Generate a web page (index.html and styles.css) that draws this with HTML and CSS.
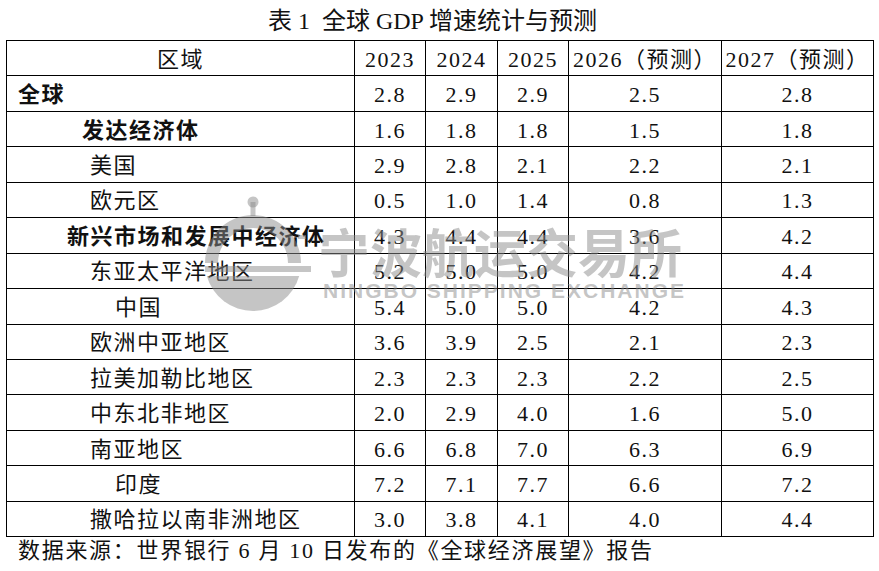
FILE: index.html
```html
<!DOCTYPE html>
<html lang="zh-CN">
<head>
<meta charset="utf-8">
<title>表 1 全球 GDP 增速统计与预测</title>
<link rel="stylesheet" href="styles.css">
</head>
<body>
<div class="page">
  <h1 class="title">表 1&nbsp; 全球 GDP 增速统计与预测</h1>
  <div class="table-wrap">
    <table class="data">
      <colgroup>
        <col class="c-region"><col class="c-yr"><col class="c-yr2"><col class="c-yr"><col class="c-fc"><col class="c-fc2">
      </colgroup>
      <thead>
        <tr><th>区域</th><th>2023</th><th>2024</th><th>2025</th><th>2026（预测）</th><th>2027（预测）</th></tr>
      </thead>
      <tbody>
        <tr class="bold"><td class="reg l0">全球</td><td>2.8</td><td>2.9</td><td>2.9</td><td>2.5</td><td>2.8</td></tr>
        <tr class="bold"><td class="reg l1">发达经济体</td><td>1.6</td><td>1.8</td><td>1.8</td><td>1.5</td><td>1.8</td></tr>
        <tr><td class="reg l2">美国</td><td>2.9</td><td>2.8</td><td>2.1</td><td>2.2</td><td>2.1</td></tr>
        <tr><td class="reg l2">欧元区</td><td>0.5</td><td>1.0</td><td>1.4</td><td>0.8</td><td>1.3</td></tr>
        <tr class="bold"><td class="reg l1b">新兴市场和发展中经济体</td><td>4.3</td><td>4.4</td><td>4.4</td><td>3.6</td><td>4.2</td></tr>
        <tr><td class="reg l2">东亚太平洋地区</td><td>5.2</td><td>5.0</td><td>5.0</td><td>4.2</td><td>4.4</td></tr>
        <tr><td class="reg l3">中国</td><td>5.4</td><td>5.0</td><td>5.0</td><td>4.2</td><td>4.3</td></tr>
        <tr><td class="reg l2">欧洲中亚地区</td><td>3.6</td><td>3.9</td><td>2.5</td><td>2.1</td><td>2.3</td></tr>
        <tr><td class="reg l2">拉美加勒比地区</td><td>2.3</td><td>2.3</td><td>2.3</td><td>2.2</td><td>2.5</td></tr>
        <tr><td class="reg l2">中东北非地区</td><td>2.0</td><td>2.9</td><td>4.0</td><td>1.6</td><td>5.0</td></tr>
        <tr><td class="reg l2">南亚地区</td><td>6.6</td><td>6.8</td><td>7.0</td><td>6.3</td><td>6.9</td></tr>
        <tr><td class="reg l3">印度</td><td>7.2</td><td>7.1</td><td>7.7</td><td>6.6</td><td>7.2</td></tr>
        <tr><td class="reg l2">撒哈拉以南非洲地区</td><td>3.0</td><td>3.8</td><td>4.1</td><td>4.0</td><td>4.4</td></tr>
      </tbody>
    </table>
    <div class="watermark" aria-hidden="true">
      <svg class="wm-logo" width="110" height="125" viewBox="0 0 110 125">
        <circle cx="48" cy="12" r="5.5"/>
        <rect x="45.5" y="12" width="5" height="14"/>
        <path d="M0 73 A48 48 0 0 1 96 73 L83 73 A35 35 0 0 0 13 73 Z"/>
        <rect x="0" y="76" width="106" height="6"/>
        <path d="M1.8 86 A48 48 0 0 0 94.2 86 Z"/>
        <rect x="93" y="45" width="8" height="4"/>
      </svg>
      <div class="wm-text">
        <div class="wm-cn">宁波航运交易所</div>
        <div class="wm-en">NINGBO SHIPPING EXCHANGE</div>
      </div>
    </div>
  </div>
  <p class="source">数据来源：世界银行 6 月 10 日发布的《全球经济展望》报告</p>
</div>
</body>
</html>
```

FILE: styles.css
```css
html, body {
  margin: 0;
  padding: 0;
  background: #fff;
}

body {
  font-family: "Liberation Serif", "Noto Sans CJK SC", serif;
  color: #000;
}

.page {
  width: 879px;
  height: 571px;
  overflow: hidden;
}

.title {
  margin: 0;
  height: 40px;
  padding-top: 2px;
  box-sizing: border-box;
  line-height: 38px;
  font-size: 24px;
  font-weight: normal;
  text-align: center;
  padding-right: 14px;
  color: #111;
}

.table-wrap {
  position: relative;
}

.data {
  border-collapse: collapse;
  table-layout: fixed;
  width: 867px;
  margin-left: 6px;
}

.c-region { width: 348px; }
.c-yr { width: 71px; }
.c-yr2 { width: 72px; }
.c-fc { width: 153px; }
.c-fc2 { width: 152px; }

.data th,
.data td {
  border: 1px solid #000;
  height: 35.45px;
  padding: 3px 0 0 0;
  box-sizing: border-box;
  text-align: center;
  vertical-align: middle;
  font-size: 22px;
  font-weight: normal;
  letter-spacing: 1.5px;
  line-height: 26px;
  white-space: nowrap;
  color: #111;
}

.data tr.bold td.reg {
  font-weight: bold;
}

.data td.reg { text-align: left; }
.data td.l0 { padding-left: 11px; }
.data td.l1 { padding-left: 75px; }
.data td.l1b { padding-left: 60px; }
.data td.l2 { padding-left: 83px; }
.data td.l3 { padding-left: 108px; }

.watermark {
  position: absolute;
  left: 205px;
  top: 150px;
  display: flex;
  align-items: flex-start;
  pointer-events: none;
}

.wm-logo {
  fill: rgba(140, 140, 140, 0.5);
}

.wm-text {
  display: flex;
  flex-direction: column;
  margin-left: 3px;
  margin-top: 32px;
}

.wm-cn {
  font-family: "Noto Sans CJK SC", sans-serif;
  font-size: 52px;
  font-weight: bold;
  line-height: 58px;
  color: rgba(140, 140, 140, 0.5);
}

.wm-en {
  font-family: "Liberation Sans", Arial, sans-serif;
  font-size: 21px;
  font-weight: bold;
  letter-spacing: 2px;
  line-height: 20px;
  margin-top: 1px;
  margin-left: 5px;
  color: rgba(140, 140, 140, 0.5);
}

.source {
  margin: 0;
  padding-left: 18px;
  font-size: 22px;
  letter-spacing: 1.7px;
  line-height: 28px;
  color: #111;
}
```
